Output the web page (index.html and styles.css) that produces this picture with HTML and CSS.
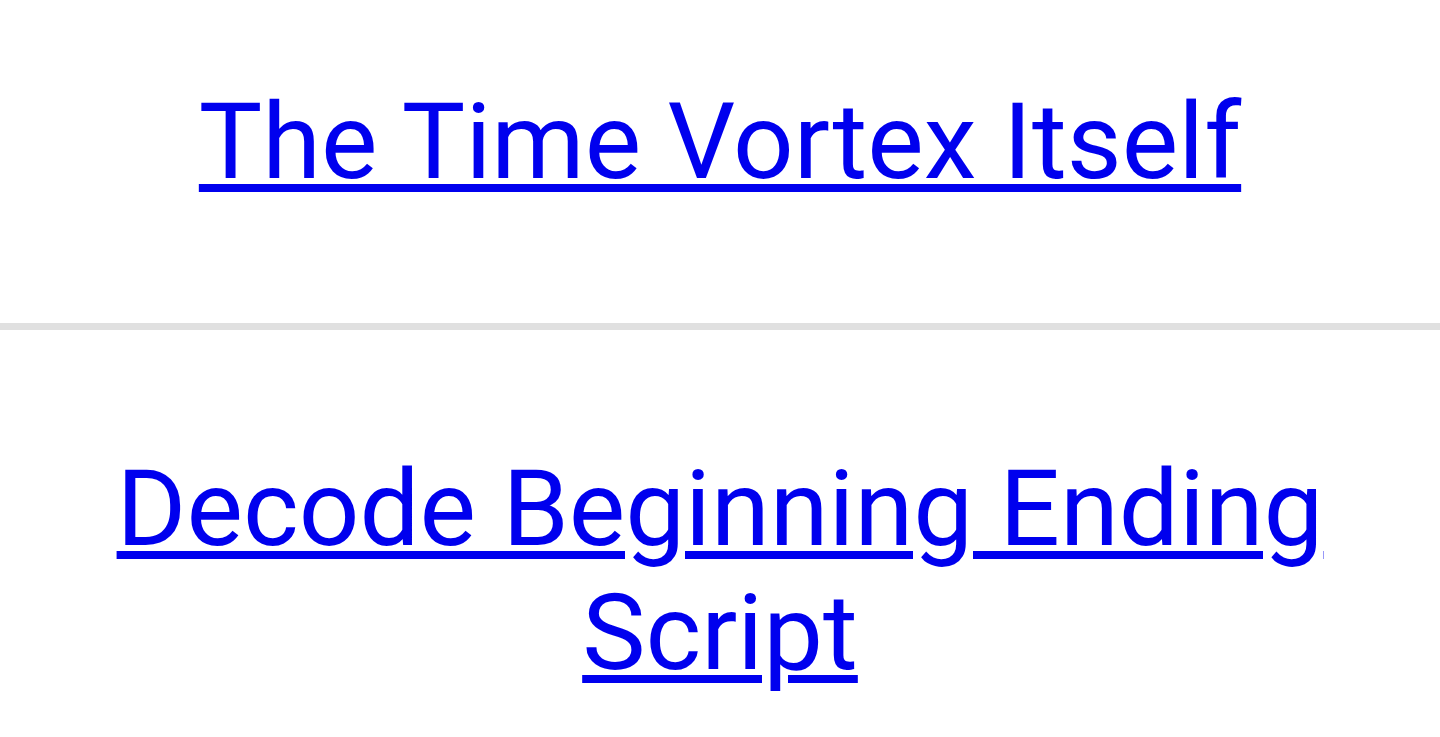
FILE: index.html
```html
<!DOCTYPE html>
<html lang="en">
<head>
<meta charset="utf-8">
<title>Links</title>
<link rel="stylesheet" href="styles.css">
</head>
<body>
<div class="list">
  <div class="item item-first"><a class="link" href="#">The Time Vortex Itself</a></div>
  <div class="item item-second"><a class="link" href="#">Decode Beginning Ending Script</a></div>
</div>
</body>
</html>
```
FILE: styles.css
```css
html, body {
  margin: 0;
  padding: 0;
  background: #ffffff;
}
body {
  font-family: Roboto, "Noto Sans", sans-serif;
  font-size: 106.5px;
  line-height: 124px;
}
.list {
  display: flex;
  flex-direction: column;
}
.item {
  text-align: center;
  padding: 0 60px;
}
.item-first {
  padding-top: 80px;
  padding-bottom: 119px;
  border-bottom: 7px solid #e0e0e0;
}
.item-second {
  padding-top: 117px;
}
.link {
  color: #0000ee;
  text-decoration: underline;
  text-decoration-thickness: 8px;
  text-underline-offset: 6px;
}
```
